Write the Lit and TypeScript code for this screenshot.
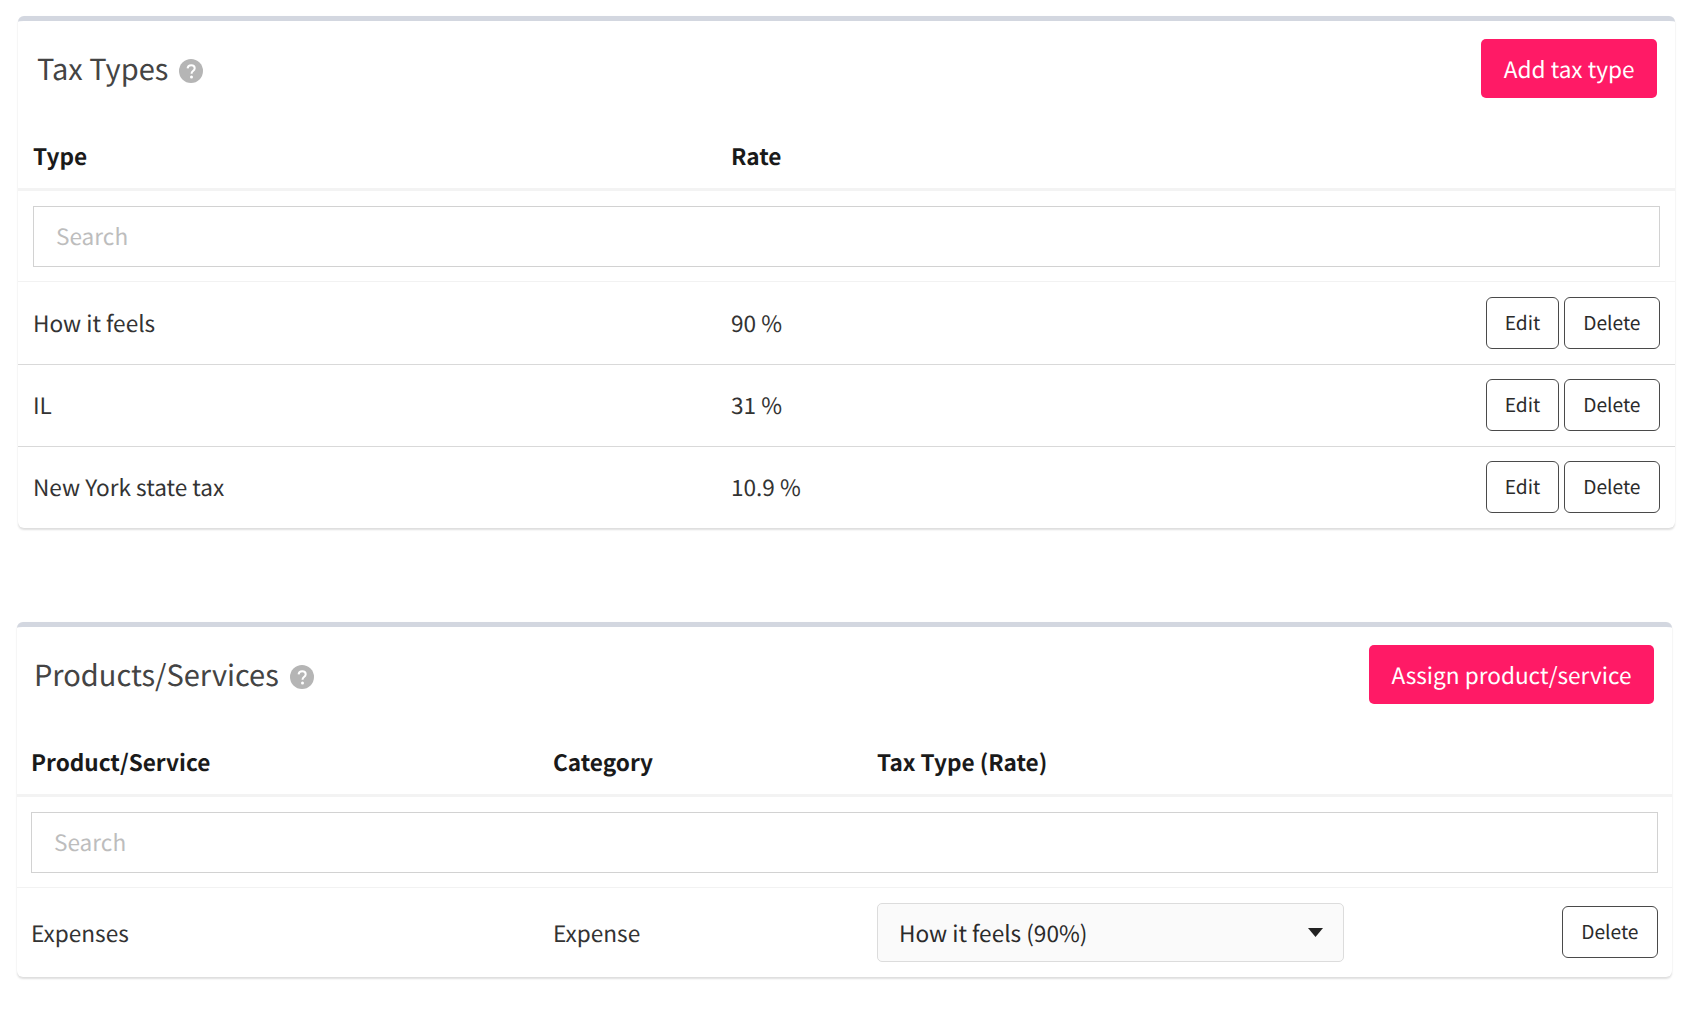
import { LitElement, html, css } from "lit";
import { customElement } from "lit/decorators.js";

const help = html`<svg class="help" viewBox="0 0 24 24" aria-hidden="true"><circle cx="12" cy="12" r="12" fill="#b5b5b5"/><path d="M8.6 9.4c.2-2 1.6-3.2 3.6-3.2 2 0 3.5 1.2 3.5 3 0 1.4-.8 2.1-1.7 2.8-.9.7-1.4 1.2-1.4 2.3v.5" fill="none" stroke="#fff" stroke-width="2"/><circle cx="12.5" cy="18" r="1.5" fill="#fff"/></svg>`;

@customElement("app-root")
export class AppRoot extends LitElement {
  static styles = css`
    :host { display: block; background: #fff; min-height: 1012px; padding: 16px 0 0; box-sizing: border-box;
      font-family: "Noto Sans CJK SC", "Noto Sans", sans-serif; color: #333; font-size: 22.6px; text-rendering: geometricPrecision; }
    button, input, select { text-rendering: geometricPrecision; }
    .card { background: #fff; border-top: 5px solid #d3d7e0; border-radius: 6px;
      box-shadow: 0 2px 2px rgba(0,0,0,.13), 0 0 1px rgba(0,0,0,.04); box-sizing: border-box; }
    .one { margin: 0 21px 94px 18px; height: 512px; }
    .two { margin: 0 24px 0 17px; height: 355px; }
    .head { display: flex; justify-content: space-between; align-items: center; padding: 18px 18px 0 19px; height: 59px; }
    .two .head { padding-left: 17px; }
    .title { display: flex; align-items: center; gap: 11px; font-size: 29px; line-height: 40px; color: #444; margin-top: -2px; }
    .help { width: 24px; height: 24px; margin-top: 6px; }
    .primary { height: 59px; padding: 0 22.5px 1px; background: #ff1a66; color: #fff; border: 0; border-radius: 5px;
      font: inherit; font-size: 22.6px; }
    .cols { display: grid; align-items: center; padding-left: 15px; padding-right: 15px; }
    .one .cols { grid-template-columns: 698px 1fr auto; }
    .two .cols { grid-template-columns: 522px 324px 1fr auto; padding-left: 14px; padding-right: 14px; }
    .th { height: 93px; box-sizing: border-box; padding-top: 25px; border-bottom: 3px solid #f3f3f3; font-weight: 700; color: #1a1a1a; }
    .search { padding: 15px 15px 14px; border-bottom: 1px solid #f2f2f2; }
    .two .search { padding-left: 14px; padding-right: 14px; }
    .search input { display: block; width: 100%; height: 61px; box-sizing: border-box; border: 1px solid #d2d2d2; padding: 0 22px 2px;
      font: inherit; outline: 0; }
    .search input::placeholder { color: #bdbdbd; }
    .row { height: 82px; box-sizing: border-box; border-bottom: 1px solid #d9d9d9; }
    .row .actions { margin-bottom: 1px; }
    .search + .row { height: 83px; }
    .search + .row .actions { margin-bottom: 0; }
    .row:last-child { border-bottom: 0; height: 81px; }
    .one .row span { margin-bottom: 2px; }
    .two .row { height: 89px; }
    .actions { display: flex; gap: 5px; }
    .btn { height: 52px; background: #fff; border: 1px solid #4a4a4a; border-radius: 6px; color: #2b2b2b; padding: 0 17.5px 3px;
      font: inherit; font-size: 19.2px; }
    .del { padding: 0 18.5px 3px; }
    .two .btn { margin-top: -1px; }
    .select { position: relative; width: 467px; height: 59px; }
    .select select { appearance: none; width: 100%; height: 100%; box-sizing: border-box; background: #fafafa; border: 1px solid #dcdcdc;
      border-radius: 5px; padding: 0 21px; font: inherit; color: #2b2b2b; outline: 0; }
    .caret { position: absolute; right: 21px; top: 25px; width: 15px; height: 9px; pointer-events: none; }
  `;

  render() {
    const rows = [["How it feels", "90 %"], ["IL", "31 %"], ["New York state tax", "10.9 %"]];
    return html`
      <section class="card one">
        <div class="head">
          <div class="title">Tax Types ${help}</div>
          <button class="primary">Add tax type</button>
        </div>
        <div class="cols th"><span>Type</span><span>Rate</span></div>
        <div class="search"><input placeholder="Search" /></div>
        ${rows.map(([a, b]) => html`<div class="cols row"><span>${a}</span><span>${b}</span>
          <div class="actions"><button class="btn">Edit</button><button class="btn del">Delete</button></div></div>`)}
      </section>
      <section class="card two">
        <div class="head">
          <div class="title">Products/Services ${help}</div>
          <button class="primary">Assign product/service</button>
        </div>
        <div class="cols th"><span>Product/Service</span><span>Category</span><span>Tax Type (Rate)</span></div>
        <div class="search"><input placeholder="Search" /></div>
        <div class="cols row"><span>Expenses</span><span>Expense</span>
          <div class="select"><select><option>How it feels (90%)</option></select>
            <svg class="caret" viewBox="0 0 15 9"><path d="M0 0h15L7.5 9z" fill="#222"/></svg></div>
          <div class="actions"><button class="btn del">Delete</button></div></div>
      </section>
    `;
  }
}
